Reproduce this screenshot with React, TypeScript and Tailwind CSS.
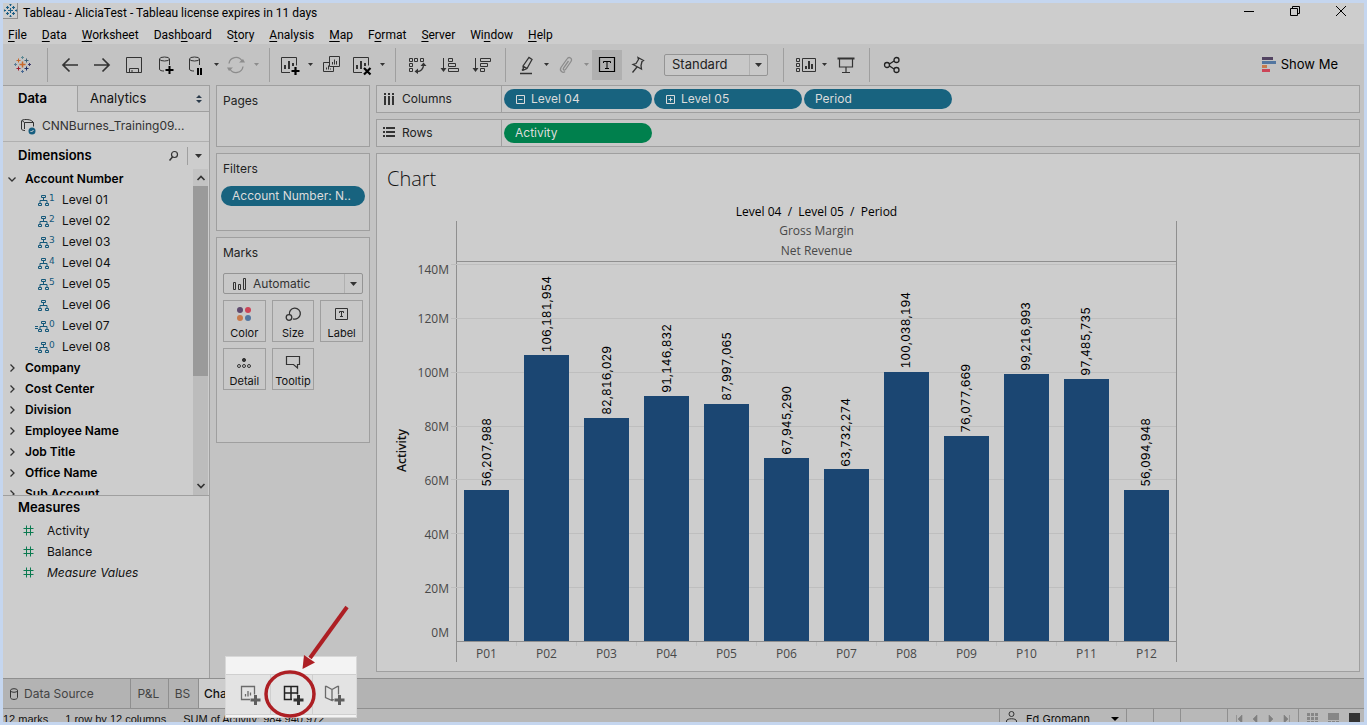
import { useState } from "react";
import type { ReactNode } from "react";

type IconProps = {
  w?: number;
  h?: number;
  children: ReactNode;
  className?: string;
};

function Icon({ w = 20, h = 20, children, className = "text-[#333]" }: IconProps) {
  return (
    <svg
      aria-hidden="true"
      className={`shrink-0 overflow-visible ${className}`}
      fill="none"
      height={h}
      stroke="currentColor"
      viewBox={`0 0 ${w} ${h}`}
      width={w}
    >
      {children}
    </svg>
  );
}

function Caret({ className = "text-[#333]" }: { className?: string }) {
  return (
    <Icon className={className} h={4} w={7}>
      <path d="M0 0h7L3.5 4z" fill="currentColor" stroke="none" />
    </Icon>
  );
}

const logoMarks = [
  { x: 8.5, y: 8.5, r: 3, c: "#c8692c" },
  { x: 4.5, y: 4.5, r: 2, c: "#c8692c" },
  { x: 12.5, y: 4.5, r: 2, c: "#3c6076" },
  { x: 4.5, y: 12.5, r: 2, c: "#a01c2c" },
  { x: 12.5, y: 12.5, r: 2, c: "#1f2d63" },
  { x: 8.5, y: 1.5, r: 1.5, c: "#5f8a94" },
  { x: 8.5, y: 15.5, r: 1.5, c: "#4a6a94" },
  { x: 1.5, y: 8.5, r: 1.5, c: "#5b7c94" },
  { x: 15.5, y: 8.5, r: 1.5, c: "#3f3a6b" },
];

function Logo() {
  return (
    <Icon h={17} w={17}>
      {logoMarks.map((m) => (
        <path
          d={`M${m.x - m.r} ${m.y}h${m.r * 2}M${m.x} ${m.y - m.r}v${m.r * 2}`}
          key={`${m.x}-${m.y}`}
          stroke={m.c}
          strokeWidth={m.r === 3 ? 1.5 : 1}
        />
      ))}
    </Icon>
  );
}

function WindowLogo() {
  return (
    <span className="flex h-4 w-[15px] items-center justify-center border-b border-r border-[#8f8f8f]">
      <Icon className="text-[#1b5e86]" h={13} w={13}>
        <path
          d="M6.500 4v5M4 6.500h5M3.500 2v3M2 3.500h3M9.500 2v3M8 3.500h3M3.500 8v3M2 9.500h3M9.500 8v3M8 9.500h3M6.500 0v2M6.500 11v2M0 6.500h2M11 6.500h2M5.500 .5h2M5.500 12.500h2M.5 5.500v2M12.500 5.500v2"
          strokeWidth="1.100"
        />
      </Icon>
    </span>
  );
}

const menus = [
  ["", "F", "ile"],
  ["", "D", "ata"],
  ["", "W", "orksheet"],
  ["Dash", "b", "oard"],
  ["S", "t", "ory"],
  ["", "A", "nalysis"],
  ["", "M", "ap"],
  ["F", "o", "rmat"],
  ["", "S", "erver"],
  ["Wi", "n", "dow"],
  ["", "H", "elp"],
];

function TitleBar() {
  return (
    <header className="bg-[#cdcdcd] font-['Roboto',sans-serif] text-xs text-black">
      <div className="flex h-[22px] items-start">
        <WindowLogo />
        <h1 className="ml-[5px] mt-0.5 leading-4">
          Tableau - AliciaTest - Tableau license expires in 11 days
        </h1>
        <div className="ml-auto mt-[3px] flex items-center">
          <button aria-label="Minimize" className="flex w-[46px] justify-center">
            <Icon className="text-black" h={12} w={12}>
              <path d="M1 5.500h10" />
            </Icon>
          </button>
          <button aria-label="Restore" className="flex w-[46px] justify-center">
            <Icon className="text-black" h={12} w={12}>
              <path d="M1.500 2.500h7v7h-7zM3.500 2.500V.5h7v7H9" />
            </Icon>
          </button>
          <button aria-label="Close" className="flex w-[46px] justify-center">
            <Icon className="text-black" h={12} w={12}>
              <path d="M1 0l10 10M11 0L1 10" />
            </Icon>
          </button>
        </div>
      </div>
      <nav className="flex h-[19px] items-center gap-[15px] pl-[5px]">
        {menus.map(([pre, key, post]) => (
          <button className="leading-4" key={pre + key + post}>
            {pre}
            <span className="underline underline-offset-2">{key}</span>
            {post}
          </button>
        ))}
      </nav>
    </header>
  );
}

function Divider() {
  return <div className="ml-[7px] mr-1.5 h-[34px] w-px shrink-0 bg-[#9f9f9f]" />;
}

function Tool({ label, narrow, children }: { label: string; narrow?: boolean; children: ReactNode }) {
  return (
    <button
      aria-label={label}
      className={`flex h-[30px] shrink-0 items-center justify-center ${narrow ? "w-7" : "w-8"}`}
    >
      {children}
    </button>
  );
}

function CaretTool({ label, muted }: { label: string; muted?: boolean }) {
  return (
    <button aria-label={label} className="flex h-[30px] w-3 shrink-0 items-center justify-center">
      <Icon className={muted ? "text-[#8c8c8c]" : "text-[#333]"} h={3} w={5}>
        <path d="M0 0h5L2.5 3z" fill="currentColor" stroke="none" />
      </Icon>
    </button>
  );
}

function ChartBoxPath() {
  return (
    <>
      <path d="M10 17.500H1.500v-15h15v8" />
      <path d="M5 14v-4M9 14V6M13 11V8" strokeWidth="2" />
    </>
  );
}

function Toolbar() {
  return (
    <div
      aria-label="Toolbar"
      className="flex h-[41px] items-center bg-[#c3c3c3] pl-0.5"
      role="toolbar"
    >
      <button aria-label="Start page" className="flex w-[35px] shrink-0 justify-center">
        <Logo />
      </button>
      <Divider />
      <Tool label="Undo">
        <Icon>
          <path d="M18 10H3M9.500 3.500L3 10l6.500 6.500" strokeWidth="1.700" />
        </Icon>
      </Tool>
      <Tool label="Redo">
        <Icon>
          <path d="M2 10h15M10.500 3.500L17 10l-6.500 6.500" strokeWidth="1.700" />
        </Icon>
      </Tool>
      <Tool label="Save">
        <Icon>
          <path d="M2.500 2.500h15v15h-15zM5.500 17.500v-4h9v4M8 17v-2" />
        </Icon>
      </Tool>
      <Tool label="New data source">
        <Icon>
          <path d="M3.500 4v10c0 1.500 2 2 4.500 2M13.500 4v6" />
          <ellipse cx="8.500" cy="4" rx="5" ry="2" />
          <path d="M13.500 11v8M9.500 15h8" stroke="#000" strokeWidth="2" />
        </Icon>
      </Tool>
      <Tool label="Pause auto updates" narrow>
        <Icon>
          <path d="M3.500 4v10c0 1.500 2 2 4.500 2M13.500 4v6" />
          <ellipse cx="8.500" cy="4" rx="5" ry="2" />
          <path d="M12 13v7M15 13v7" stroke="#000" strokeWidth="2" />
        </Icon>
      </Tool>
      <CaretTool label="Update options" />
      <Tool label="Run update" narrow>
        <Icon className="text-[#8c8c8c]">
          <path d="M3 8.500A7 7 0 0116 6M17 11.500A7 7 0 014 14" strokeWidth="1.300" />
          <path d="M13 7.500h6L17 4zM1 12.500h6L3 16z" fill="currentColor" stroke="none" />
        </Icon>
      </Tool>
      <CaretTool label="Run options" muted />
      <Divider />
      <Tool label="New worksheet" narrow>
        <Icon>
          <ChartBoxPath />
          <path d="M15.500 12v8M11.500 16h8" stroke="#000" strokeWidth="2.200" />
        </Icon>
      </Tool>
      <CaretTool label="New worksheet options" />
      <Tool label="Duplicate">
        <Icon>
          <path d="M7.500 1.500h10v10h-10zM7.500 7.500h-6v9h10v-5" />
          <path d="M10.500 9.500V7M12.500 9.500v-5M14.500 9.500V6M4.500 14.500v-2M6.500 14.500v-4M8.500 14.500v-1" />
        </Icon>
      </Tool>
      <Tool label="Clear sheet" narrow>
        <Icon>
          <ChartBoxPath />
          <path d="M12 13l6.500 6.500M18.500 13L12 19.500" stroke="#000" strokeWidth="2.200" />
        </Icon>
      </Tool>
      <CaretTool label="Clear options" />
      <Divider />
      <Tool label="Swap rows and columns">
        <Icon>
          <path d="M1.500 3.500h3v3h-3zM6.500 3.500h3v3h-3zM12.500 3.500h3v3h-3zM1.500 8.500h3v3h-3zM1.500 13.500h3v3h-3z" />
          <path d="M15.500 10c0 4-3 6.500-6 6.500" strokeWidth="1.300" />
          <path d="M12.500 11l3-3.500 3 3.500zM10 13.500v5.500L6.500 16.500z" fill="currentColor" stroke="none" />
        </Icon>
      </Tool>
      <Tool label="Sort ascending">
        <Icon>
          <path d="M3.500 3v13M8.500 3.500h4v3h-4zM8.500 8.500h7v3h-7zM8.500 13.500h10v3h-10z" />
          <path d="M.5 13h6l-3 4z" fill="currentColor" stroke="none" />
        </Icon>
      </Tool>
      <Tool label="Sort descending">
        <Icon>
          <path d="M3.500 3v13M8.500 3.500h10v3h-10zM8.500 8.500h7v3h-7zM8.500 13.500h4v3h-4z" />
          <path d="M.5 13h6l-3 4z" fill="currentColor" stroke="none" />
        </Icon>
      </Tool>
      <Divider />
      <Tool label="Highlight" narrow>
        <Icon>
          <path d="M7 11l6-8.500 3 2-5 9-3.500 1.500zM7 11l4 2.500M6 15.500l1.500-2" strokeWidth="1.300" />
          <path d="M4 18.500h12" strokeWidth="1.500" />
        </Icon>
      </Tool>
      <CaretTool label="Highlight options" />
      <Tool label="Group members" narrow>
        <Icon className="text-[#8c8c8c]">
          <path
            d="M12.500 6l-5 7c-1 1.500 1 3 2 1.500l5.500-8c2-3-2-5.500-4-2.500l-6 8.500c-2 3.500 2 6 4 4"
            strokeWidth="1.300"
          />
        </Icon>
      </Tool>
      <CaretTool label="Group options" muted />
      <button
        aria-label="Show mark labels"
        aria-pressed="true"
        className="flex size-[30px] shrink-0 items-center justify-center bg-[#b0b0b0]"
      >
        <Icon className="text-black">
          <path d="M2.500 2.500h15v14h-15z" strokeWidth="1.200" />
          <path d="M6.500 8V6.500h7V8M10 6.500v7M8 13.500h4" />
        </Icon>
      </button>
      <Tool label="Fix axes">
        <Icon>
          <path
            d="M10 2.500l5.500 3-1.500 1-1 4 .5 3.500-8.500-4.500 3-1 2.500-4zM9 12l-4.500 5.500"
            strokeWidth="1.300"
          />
        </Icon>
      </Tool>
      <div className="relative ml-2.5 mr-2 h-[22px] w-[104px] shrink-0">
        <select
          aria-label="Fit"
          className="block h-full w-full appearance-none rounded-xs border border-[#949494] bg-[#c8c8c8] pb-0.5 pl-[7px] text-[13px] leading-4 text-[#222]"
          defaultValue="Standard"
        >
          <option>Standard</option>
          <option>Entire View</option>
        </select>
        <span className="pointer-events-none absolute inset-y-px right-px flex w-[18px] items-center justify-center border-l border-[#b0b0b0]">
          <Caret />
        </span>
      </div>
      <Divider />
      <Tool label="Show or hide cards" narrow>
        <Icon>
          <path d="M2.500 3.500h3v3h-3zM2.500 8.500h3v3h-3zM2.500 13.500h3v3h-3zM8.500 3.500h13v13h-13z" />
          <path d="M12 14v-3M15 14V6M18 14V9" strokeWidth="2" />
        </Icon>
      </Tool>
      <CaretTool label="Card options" />
      <Tool label="Presentation mode">
        <Icon>
          <path d="M1.500 3.500h17" strokeWidth="2" />
          <path d="M3.500 4v8h13V4M10 12v5M6 17.500h8" strokeWidth="1.200" />
        </Icon>
      </Tool>
      <Divider />
      <Tool label="Share">
        <Icon className="text-[#222]">
          <circle cx="5" cy="10" r="2.500" strokeWidth="1.300" />
          <circle cx="14.500" cy="5" r="2.500" strokeWidth="1.300" />
          <circle cx="14.500" cy="15" r="2.500" strokeWidth="1.300" />
          <path d="M7.500 9l4.500-3M7.500 11l4.500 3" strokeWidth="1.300" />
        </Icon>
      </Tool>
      <button className="ml-auto mr-[26px] flex items-center gap-[5px] text-[13px] leading-5 text-black">
        <Icon h={16} w={14}>
          <g stroke="none">
            <path d="M0 0h11v3H0z" fill="#524361" />
            <path d="M0 4h14v3H0z" fill="#5376a0" />
            <path d="M0 8h5v3H0z" fill="#c87a4c" />
            <path d="M0 12h8v3H0z" fill="#cc4457" />
          </g>
        </Icon>
        <span className="pb-px">Show Me</span>
      </button>
    </div>
  );
}

const levels = [
  { name: "Level 01", mark: "1" },
  { name: "Level 02", mark: "2" },
  { name: "Level 03", mark: "3" },
  { name: "Level 04", mark: "4" },
  { name: "Level 05", mark: "5" },
  { name: "Level 06", mark: "" },
  { name: "Level 07", mark: "0", calculated: true },
  { name: "Level 08", mark: "0", calculated: true },
];

const folders = [
  "Company",
  "Cost Center",
  "Division",
  "Employee Name",
  "Job Title",
  "Office Name",
  "Sub Account",
];

const measures = ["Activity", "Balance", "Measure Values"];

function HierarchyIcon({ mark, calculated }: { mark: string; calculated?: boolean }) {
  return (
    <Icon className="text-[#15587a]" h={14} w={22}>
      {calculated && <path d="M0 7.500h3M0 9.500h3" />}
      <path d="M6.500 2.500h4v2h-4zM3.500 10.500h3v2h-3zM10.500 10.500h3v2h-3zM8.500 4.500v3M5 10V7.500h7V10" />
      <text
        className="font-['DejaVu_Sans',sans-serif] text-[9px]"
        fill="currentColor"
        stroke="none"
        x="14"
        y="8"
      >
        {mark}
      </text>
    </Icon>
  );
}

function DataPane() {
  return (
    <aside className="flex w-[207px] shrink-0 flex-col border-r border-t border-[#9f9f9f] bg-[#cdcdcd] text-xs text-[#111]">
      <div className="flex h-[26px] shrink-0 text-[13px]" role="tablist">
        <button
          aria-selected="true"
          className="w-[74px] pl-[15px] text-left font-semibold text-black"
          role="tab"
        >
          Data
        </button>
        <button
          aria-selected="false"
          className="flex flex-1 items-center justify-between border-b border-l border-[#9f9f9f] bg-[#c8c8c8] pl-3 pr-[7px]"
          role="tab"
        >
          Analytics
          <Icon className="text-[#2b3b4b]" h={8} w={6}>
            <path d="M0 3h6L3 0zM0 5h6L3 8z" fill="currentColor" stroke="none" />
          </Icon>
        </button>
      </div>
      <button className="flex h-[30px] shrink-0 items-center gap-1 border-b border-[#b0b0b0] pb-0.5 pl-[17px] text-[#333]">
        <Icon h={18} w={18}>
          <path d="M1.500 4c0-2 9-2 10 0M1.500 4v8c0 1 2 1.500 3.500 1.500M4.500 5.500h9v4M4.500 5.500V12M2 3.500l2.500 2M11.500 3.500l2 2" />
          <circle cx="12" cy="14" fill="#175e80" r="3.500" stroke="none" />
          <path d="M10.500 14l1 1 2-2" stroke="#ddd" />
        </Icon>
        CNNBurnes_Training09...
      </button>
      <div className="flex h-[27px] shrink-0 items-center pl-[15px]">
        <h2 className="text-[13px] font-semibold text-black">Dimensions</h2>
        <button aria-label="Find field" className="ml-auto mr-2">
          <Icon h={12} w={12}>
            <circle cx="7.500" cy="4.500" r="3" strokeWidth="1.200" />
            <path d="M5.500 7l-3 3.500" strokeWidth="1.500" />
          </Icon>
        </button>
        <button
          aria-label="View options"
          className="flex h-[18px] w-[22px] items-center justify-center border-l border-[#9f9f9f]"
        >
          <Caret />
        </button>
      </div>
      <div className="flex h-[327px] shrink-0 overflow-hidden border-b border-[#9f9f9f]">
        <ul className="-mt-px flex-1">
          <li className="flex h-[21px] items-center gap-2 pl-[5px] font-semibold text-black">
            <Icon h={8} w={9}>
              <path d="M.5 2.500L4 6l3.500-3.500" strokeWidth="1.300" />
            </Icon>
            Account Number
          </li>
          {levels.map((level) => (
            <li className="flex h-[21px] items-center gap-[5px] pl-8" key={level.name}>
              <HierarchyIcon calculated={level.calculated} mark={level.mark} />
              {level.name}
            </li>
          ))}
          {folders.map((folder) => (
            <li
              className="flex h-[21px] items-center gap-2 pl-[5px] font-semibold text-black"
              key={folder}
            >
              <Icon h={8} w={9}>
                <path d="M2.500 .5L6 4 2.500 7.500" strokeWidth="1.300" />
              </Icon>
              {folder}
            </li>
          ))}
        </ul>
        <div className="mr-px flex w-[15px] flex-col items-center bg-[#bcbcbc]">
          <span className="flex h-[17px] w-full items-center justify-center bg-[#c3c3c3]">
            <Icon h={6} w={8}>
              <path d="M.5 5L4 1.500 7.500 5" strokeWidth="1.700" />
            </Icon>
          </span>
          <span className="h-[190px] w-full bg-[#9a9a9a]" />
          <span className="mb-1.5 mt-auto">
            <Icon h={6} w={8}>
              <path d="M.5 1L4 4.500 7.500 1" strokeWidth="1.700" />
            </Icon>
          </span>
        </div>
      </div>
      <h2 className="pb-0.5 pl-[15px] text-[13px] font-semibold leading-[22px] text-black">
        Measures
      </h2>
      <ul>
        {measures.map((measure) => (
          <li
            className={`flex h-[21px] items-center gap-[13px] pl-5 ${
              measure === "Measure Values" ? "italic" : ""
            }`}
            key={measure}
          >
            <Icon className="text-[#0b7a50]" h={11} w={11}>
              <path d="M3.500 .5v10M7.500 .5v10M.5 3.500h10M.5 7.500h10" />
            </Icon>
            {measure}
          </li>
        ))}
      </ul>
    </aside>
  );
}

function Pill({ children, green }: { children: ReactNode; green?: boolean }) {
  return (
    <button
      className={`flex h-5 w-[148px] items-center gap-1.5 rounded-full pl-[11px] text-xs text-[#dcdcdc] ${
        green ? "bg-[#00804d]" : "bg-[#18637f]"
      }`}
    >
      {children}
    </button>
  );
}

function Toggle({ open }: { open?: boolean }) {
  return (
    <Icon className="text-[#dcdcdc]" h={9} w={10}>
      <path d={open ? "M1.500.5h8v8h-8zM3.500 4.500h4" : "M1.500.5h8v8h-8zM3.500 4.500h4M5.500 2.500v4"} />
    </Icon>
  );
}

function MarkButton({ label, children }: { label: string; children: ReactNode }) {
  return (
    <button className="flex h-[42px] flex-col items-center justify-between border border-[#9f9f9f] pt-[3px] text-[11px] leading-4 text-[#111]">
      {children}
      {label}
    </button>
  );
}

function Cards() {
  return (
    <div className="flex w-[154px] shrink-0 flex-col gap-1.5 text-xs text-[#222]">
      <section className="h-[62px] border border-[#9f9f9f] bg-[#c8c8c8] px-1.5 pt-1.5">
        <h2 className="leading-[18px]">Pages</h2>
      </section>
      <section className="h-[78px] border border-[#9f9f9f] bg-[#c8c8c8] pt-1.5">
        <h2 className="pl-1.5 leading-[18px]">Filters</h2>
        <button className="mx-1 mt-2 flex h-5 w-36 items-center rounded-full bg-[#18637f] pl-[11px] text-[#dcdcdc]">
          Account Number: N..
        </button>
      </section>
      <section className="h-[206px] border border-[#9f9f9f] bg-[#c8c8c8] px-1.5 pt-1.5">
        <h2 className="leading-[18px]">Marks</h2>
        <div className="relative mt-[11px] h-[21px] w-[140px]">
          <select
            aria-label="Mark type"
            className="block h-full w-full appearance-none rounded-xs border border-[#949494] pl-[29px] text-xs text-[#333]"
            defaultValue="Automatic"
          >
            <option>Automatic</option>
            <option>Bar</option>
          </select>
          <span className="pointer-events-none absolute inset-y-0 left-2.5 flex items-center">
            <Icon h={12} w={14}>
              <path d="M.5 4.500h2v7h-2zM5.500 6.500h2v5h-2zM10.500 .5h2v11h-2z" />
            </Icon>
          </span>
          <span className="pointer-events-none absolute inset-y-px right-px flex w-[18px] items-center justify-center border-l border-[#b0b0b0]">
            <Caret />
          </span>
        </div>
        <div className="mt-1.5 grid w-[140px] grid-cols-3 gap-1.5">
          <MarkButton label="Color">
            <Icon w={16}>
              <g stroke="none">
                <circle cx="4" cy="6" fill="#5f4a6e" r="3" />
                <circle cx="12" cy="6" fill="#cc4457" r="3" />
                <circle cx="4" cy="14" fill="#c87a4c" r="3" />
                <circle cx="12" cy="14" fill="#5376a0" r="3" />
              </g>
            </Icon>
          </MarkButton>
          <MarkButton label="Size">
            <Icon>
              <path d="M6.500 11A5.500 5.500 0 1 1 10 14.800" strokeWidth="1.300" />
              <circle cx="6" cy="13.500" r="2.800" strokeWidth="1.300" />
            </Icon>
          </MarkButton>
          <MarkButton label="Label">
            <Icon>
              <path d="M3.500 4.500h12v11h-12zM7.500 9V7.500h4V9M9.500 7.500v5M8 12.500h3" />
            </Icon>
          </MarkButton>
          <MarkButton label="Detail">
            <Icon>
              <circle cx="10" cy="8" fill="currentColor" r="1.600" />
              <circle cx="5" cy="14" r="1.500" />
              <circle cx="10" cy="14" r="1.500" />
              <circle cx="15" cy="14" r="1.500" />
            </Icon>
          </MarkButton>
          <MarkButton label="Tooltip">
            <Icon>
              <path d="M3.500 4.500h13v8h-2v3.500l-4-3.500h-7z" strokeWidth="1.200" />
            </Icon>
          </MarkButton>
        </div>
      </section>
    </div>
  );
}

const periods = [
  { name: "P01", value: 56207988 },
  { name: "P02", value: 106181954 },
  { name: "P03", value: 82816029 },
  { name: "P04", value: 91146832 },
  { name: "P05", value: 87997065 },
  { name: "P06", value: 67945290 },
  { name: "P07", value: 63732274 },
  { name: "P08", value: 100038194 },
  { name: "P09", value: 76077669 },
  { name: "P10", value: 99216993 },
  { name: "P11", value: 97485735 },
  { name: "P12", value: 56094948 },
];

const ticks = ["120M", "100M", "80M", "60M", "40M", "20M"];
const axisMax = 140000000;

function Chart() {
  return (
    <section className="flex-1 border border-[#9f9f9f] bg-[#cdcdcd] font-['Open_Sans',sans-serif] text-xs text-[#484848]">
      <h2 className="px-2.5 pt-2.5 text-xl font-light leading-[30px] text-[#111]">Chart</h2>
      <div className="mt-2 flex pl-[15px]">
        <div className="flex w-5 items-end justify-center pb-[190px]">
          <span className="rotate-180 font-semibold leading-5 text-[#111] [writing-mode:vertical-rl]">
            Activity
          </span>
        </div>
        <div className="flex w-11 flex-col justify-end pb-5 pr-[7px] text-right">
          <span className="h-[27px] leading-[10px]">140M</span>
          {ticks.map((tick) => (
            <span className="h-[54px] leading-[54px]" key={tick}>
              {tick}
            </span>
          ))}
          <span className="h-[26px] pt-2 leading-[18px]">0M</span>
        </div>
        <div className="w-[721px]">
          <h3 className="text-center font-medium leading-[19px] text-black">
            Level 04&nbsp; / &nbsp;Level 05&nbsp; / &nbsp;Period
          </h3>
          <div className="border-x border-[#8f8f8f]">
            <div className="border-b border-[#8f8f8f] text-center leading-5">
              <p>Gross Margin</p>
              <p>Net Revenue</p>
            </div>
            <div className="relative mt-0.5 flex h-[378px] border-b border-[#8f8f8f]">
              <div className="absolute inset-y-0 -left-1.5 right-0 flex flex-col">
                {[0, 1, 2, 3, 4, 5, 6].map((row) => (
                  <span className="flex-1 border-t border-[#bebebe]" key={row} />
                ))}
              </div>
              {periods.map((period) => (
                <div
                  className="relative flex flex-1 flex-col items-center justify-end"
                  key={period.name}
                >
                  <span className="mb-[3px] rotate-180 font-['Inter',sans-serif] leading-4 tabular-nums text-black [writing-mode:vertical-rl]">
                    {period.value.toLocaleString("en-US")}
                  </span>
                  <span
                    className="w-[45px] bg-[#1b4672]"
                    style={{ height: `${(period.value / axisMax) * 100}%` }}
                  />
                </div>
              ))}
            </div>
            <div className="flex h-5 text-center leading-6">
              {periods.map((period) => (
                <span className="h-1 flex-1 border-r border-[#bebebe] last:border-r-0" key={period.name}>
                  {period.name}
                </span>
              ))}
            </div>
          </div>
        </div>
      </div>
    </section>
  );
}

function Workspace() {
  return (
    <main className="flex min-w-0 flex-1 flex-col gap-1.5">
      <div className="flex h-7 shrink-0 border border-[#9f9f9f] bg-[#c8c8c8] text-xs text-[#222]">
        <h2 className="flex w-[125px] shrink-0 items-center gap-1.5 border-r border-[#9f9f9f] pl-1.5">
          <Icon h={12} w={13}>
            <path d="M2 0v2M6 0v2M10 0v2M2 3v9M6 3v9M10 3v9" strokeWidth="2" />
          </Icon>
          Columns
        </h2>
        <div className="flex items-center gap-0.5 pl-0.5">
          <Pill>
            <Toggle open />
            Level 04
          </Pill>
          <Pill>
            <Toggle />
            Level 05
          </Pill>
          <Pill>Period</Pill>
        </div>
      </div>
      <div className="flex h-7 shrink-0 border border-[#9f9f9f] bg-[#c8c8c8] text-xs text-[#222]">
        <h2 className="flex w-[125px] shrink-0 items-center gap-1.5 border-r border-[#9f9f9f] pl-1.5">
          <Icon h={12} w={13}>
            <path d="M0 1h2M0 5h2M0 9h2M3 1h9M3 5h9M3 9h9" strokeWidth="2" />
          </Icon>
          Rows
        </h2>
        <div className="flex items-center pl-0.5">
          <Pill green>Activity</Pill>
        </div>
      </div>
      <Chart />
    </main>
  );
}

function NewSheetButtons() {
  return (
    <div className="absolute bottom-[-10px] left-[222px] z-10 h-[62px] w-[132px] border border-[#d8d8d8] bg-[#f3f3f3] pt-[17px]">
      <div className="flex h-[41px] divide-x divide-[#cfcfcf] border-y border-[#cfcfcf] bg-[#e3e3e3] pl-[3px] pr-0.5">
        <button aria-label="New worksheet" className="flex flex-1 items-center justify-center">
          <Icon className="text-[#6a6a6a]">
            <path d="M10 14.500H1.500v-13h13v8" strokeWidth="1.300" />
            <path d="M5.500 11.500V9M8 11.500V6M10.500 10.500V7.500" strokeWidth="1.300" />
            <path d="M15.500 10v10M10.500 15h10" stroke="#5e5e5e" strokeWidth="3" />
          </Icon>
        </button>
        <button aria-label="New dashboard" className="flex flex-1 items-center justify-center">
          <Icon className="text-[#222]">
            <path d="M10 14.500H2.500v-13h13v8M9 1.500v13M2.500 8h13" strokeWidth="1.500" />
            <path d="M16.500 10v10M11.500 15h10" stroke="#333" strokeWidth="3" />
          </Icon>
        </button>
        <button aria-label="New story" className="flex flex-1 items-center justify-center">
          <Icon className="text-[#6a6a6a]">
            <path
              d="M8 4.500L2.500 1.500h-1v11L8 15.500zM8 4.500l5.500-3h1v8M8 15.500l2-1"
              strokeWidth="1.300"
            />
            <path d="M15.500 10v10M10.500 15h10" stroke="#5e5e5e" strokeWidth="3" />
          </Icon>
        </button>
      </div>
      <svg
        aria-hidden="true"
        className="pointer-events-none absolute bottom-[-2px] left-[38px]"
        fill="none"
        height="116"
        stroke="#ad1f24"
        viewBox="0 0 90 116"
        width="90"
      >
        <ellipse cx="26" cy="91" rx="24" ry="22" strokeWidth="3.500" />
        <path d="M83 4L46 55" strokeWidth="4" />
        <path d="M38.500 66l1.500-14 11 7.500z" fill="#ad1f24" stroke="none" />
      </svg>
    </div>
  );
}

function SheetTabs() {
  return (
    <div className="relative flex h-[30px] shrink-0 border-t border-[#8f8f8f] bg-[#b3b3b3] text-xs text-[#444]">
      <button className="flex w-32 items-center gap-[5px] border-r border-[#8f8f8f] pl-1.5">
        <Icon h={12} w={10}>
          <path d="M1.500 2.500v7c0 2.500 7 2.500 7 0v-7" />
          <ellipse cx="5" cy="2.500" rx="3.500" ry="1.800" />
        </Icon>
        Data Source
      </button>
      <button className="w-[38px] border-r border-[#8f8f8f] pr-0.5">P&amp;L</button>
      <button className="w-[30px] border-r border-[#8f8f8f] pr-0.5">BS</button>
      <button className="w-12 bg-[#cdcdcd] pl-[5px] text-left font-medium text-[#111]">
        Chart
      </button>
      <NewSheetButtons />
    </div>
  );
}

const pagerPaths = ["M.5 0v8M6 0v8L2 4z", "M5 0v8L1 4z", "M1 0v8l4-4z", "M5.500 0v8M0 0v8l4-4z"];

function StatusBar({ user }: { user: string }) {
  return (
    <footer className="flex h-[14px] shrink-0 overflow-hidden border-t border-[#8f8f8f] bg-[#b8b8b8] text-[11px] leading-5 text-[#111]">
      <div className="flex gap-[17px] font-['Liberation_Sans',sans-serif]">
        <span>12 marks</span>
        <span>1 row by 12 columns</span>
        <span>SUM of Activity: 984,940,972</span>
      </div>
      <div className="ml-auto flex divide-x divide-[#8f8f8f] border-l border-[#8f8f8f]">
        <button className="flex w-[127px] pl-1.5">
          <Icon className="mt-0.5 text-[#333]" h={14} w={11}>
            <circle cx="5.500" cy="3" r="2.500" />
            <path d="M.5 13V10c0-3 10-3 10 0v3" />
          </Icon>
          <span className="ml-[9px]">{user}</span>
          <Icon className="ml-auto mr-[7px] mt-2 text-black" h={4} w={8}>
            <path d="M0 0h8L4 4z" fill="currentColor" stroke="none" />
          </Icon>
        </button>
        <span className="w-[27px]" />
        <span className="w-[27px]" />
        <span className="w-[47px]" />
        <div className="flex w-[71px] items-start justify-between px-2 pt-1.5">
          {pagerPaths.map((d) => (
            <Icon className="text-[#808080]" h={8} key={d} w={6}>
              <path d={d} fill="currentColor" strokeWidth=".6" />
            </Icon>
          ))}
        </div>
        <div className="flex w-[65px] items-start justify-between pl-2 pr-1 pt-1">
          <Icon className="text-[#868686]" h={10} w={11}>
            <path d="M0 1.500h11M0 5.500h11M0 9.500h11" strokeDasharray="3 1" strokeWidth="3" />
          </Icon>
          <Icon className="text-[#868686]" h={10} w={11}>
            <path d="M0 3.500h11" strokeWidth="7" />
            <path d="M0 9.500h11" strokeDasharray="3 1" strokeWidth="3" />
          </Icon>
          <Icon className="text-[#333]" h={10} w={11}>
            <path d="M0 5h11" strokeWidth="10" />
          </Icon>
        </div>
      </div>
    </footer>
  );
}

export default function App() {
  const [user] = useState("Ed Gromann");

  return (
    <div className="flex h-screen flex-col overflow-hidden border-[3px] border-[#c5d6ef] bg-[#c3c3c3] font-['Inter',sans-serif]">
      <TitleBar />
      <Toolbar />
      <div className="flex min-h-0 flex-1">
        <DataPane />
        <div className="flex min-w-0 flex-1 gap-1.5 pb-1.5 pl-1.5 pr-1">
          <Cards />
          <Workspace />
        </div>
      </div>
      <SheetTabs />
      <StatusBar user={user} />
    </div>
  );
}
